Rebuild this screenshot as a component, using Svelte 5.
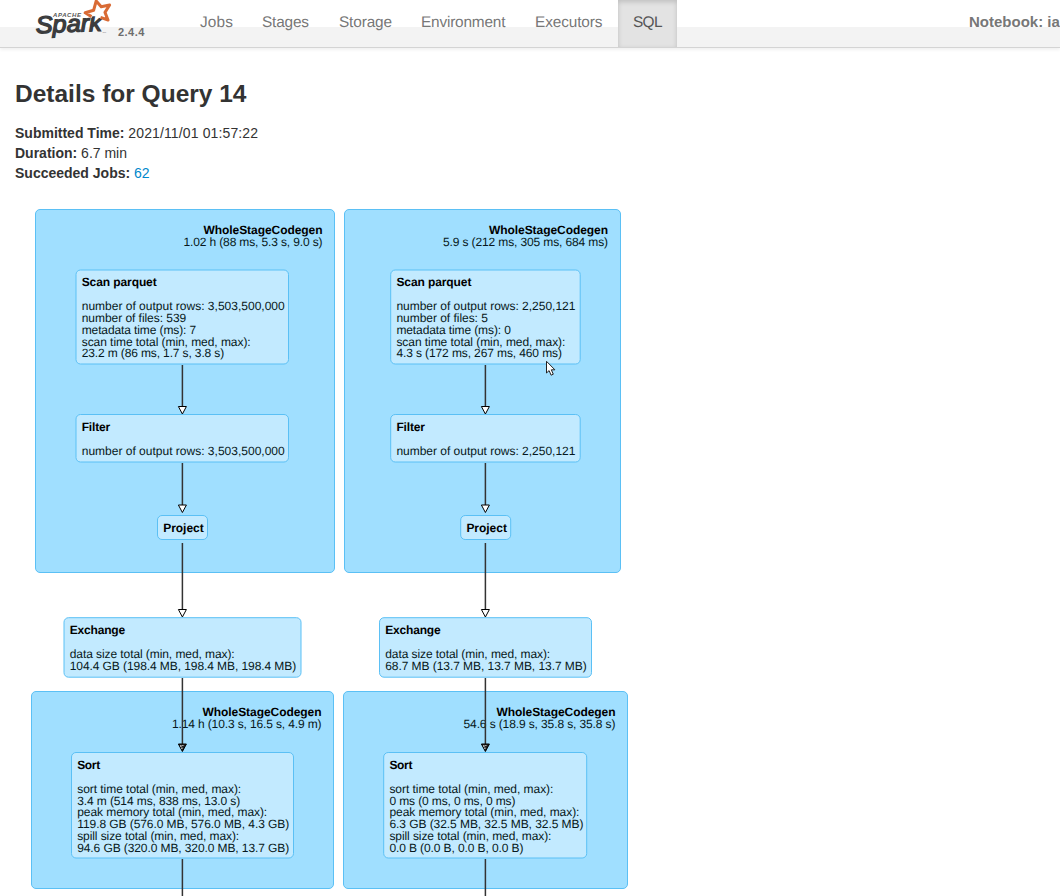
<script>
  const tabs = [
    { label: 'Jobs', width: 33 },
    { label: 'Stages', width: 47 },
    { label: 'Storage', width: 53 },
    { label: 'Environment', width: 84.5 },
    { label: 'Executors', width: 67.5 },
    { label: 'SQL', width: 29.5, active: true }
  ];

  const clusters = [
    { x: 35.5, y: 209.5, w: 299, h: 363, right: 322.5, title: 'WholeStageCodegen', detail: '1.02 h (88 ms, 5.3 s, 9.0 s)', len: 139 },
    { x: 344.5, y: 209.5, w: 276, h: 363, right: 608, title: 'WholeStageCodegen', detail: '5.9 s (212 ms, 305 ms, 684 ms)', len: 165 },
    { x: 31.5, y: 691.5, w: 302, h: 197, right: 321.5, title: 'WholeStageCodegen', detail: '1.14 h (10.3 s, 16.5 s, 4.9 m)', len: 149.5 },
    { x: 343.5, y: 691.5, w: 284, h: 197, right: 615.5, title: 'WholeStageCodegen', detail: '54.6 s (18.9 s, 35.8 s, 35.8 s)', len: 152 }
  ];

  const nodes = [
    { x: 76, y: 270, w: 212.5, h: 94, title: 'Scan parquet', tlen: 75, lines: [
      ['number of output rows: 3,503,500,000', 203], ['number of files: 539', 104.5], ['metadata time (ms): 7', 114.5],
      ['scan time total (min, med, max):', 169], ['23.2 m (86 ms, 1.7 s, 3.8 s)', 142.5] ] },
    { x: 390.7, y: 270, w: 189.5, h: 94, title: 'Scan parquet', tlen: 75, lines: [
      ['number of output rows: 2,250,121', 179], ['number of files: 5', 91.5], ['metadata time (ms): 0', 114.5],
      ['scan time total (min, med, max):', 169], ['4.3 s (172 ms, 267 ms, 460 ms)', 165.5] ] },
    { x: 76, y: 414.5, w: 212.5, h: 47.5, title: 'Filter', tlen: 28.5, lines: [['number of output rows: 3,503,500,000', 203]] },
    { x: 390.7, y: 414.5, w: 189.5, h: 47.5, title: 'Filter', tlen: 28.5, lines: [['number of output rows: 2,250,121', 179]] },
    { x: 157.5, y: 515.5, w: 50, h: 24, title: 'Project', tlen: 40.5, lines: [] },
    { x: 460.7, y: 515.5, w: 50, h: 24, title: 'Project', tlen: 40.5, lines: [] },
    { x: 64, y: 617.7, w: 237, h: 59.5, title: 'Exchange', tlen: 55.5, lines: [
      ['data size total (min, med, max):', 165], ['104.4 GB (198.4 MB, 198.4 MB, 198.4 MB)', 226.5] ] },
    { x: 379.5, y: 617.7, w: 212, h: 59.5, title: 'Exchange', tlen: 55.5, lines: [
      ['data size total (min, med, max):', 165], ['68.7 MB (13.7 MB, 13.7 MB, 13.7 MB)', 201.5] ] },
    { x: 71.5, y: 752.5, w: 222, h: 105.5, title: 'Sort', tlen: 23, lines: [
      ['sort time total (min, med, max):', 164], ['3.4 m (514 ms, 838 ms, 13.0 s)', 163], ['peak memory total (min, med, max):', 190],
      ['119.8 GB (576.0 MB, 576.0 MB, 4.3 GB)', 212], ['spill size total (min, med, max):', 162], ['94.6 GB (320.0 MB, 320.0 MB, 13.7 GB)', 212] ] },
    { x: 383.7, y: 752.5, w: 203, h: 105.5, title: 'Sort', tlen: 23, lines: [
      ['sort time total (min, med, max):', 164], ['0 ms (0 ms, 0 ms, 0 ms)', 126], ['peak memory total (min, med, max):', 190],
      ['6.3 GB (32.5 MB, 32.5 MB, 32.5 MB)', 194], ['spill size total (min, med, max):', 162], ['0.0 B (0.0 B, 0.0 B, 0.0 B)', 134] ] }
  ];

  const edges = [];
  for (const x of [182.4, 485.4]) {
    edges.push({ x, from: 365, to: 414 }, { x, from: 463, to: 512.5 }, { x, from: 543, to: 617 },
      { x, from: 678, to: 751.5, dark: true }, { x, from: 859, to: 910 });
  }
</script>

<div class="page">
  <header>
    <div class="brand">
      <svg class="logo" width="78" height="42" viewBox="34 0 78 42" aria-label="Apache Spark">
        <text class="spark" x="36" y="33.2" textLength="66" lengthAdjust="spacingAndGlyphs" transform="rotate(-2 36 33.2)">Spark</text>
        <path class="halo" d="M92.5 16.2L85.2 12.8L93.6 10.3L96.2 1L101.2 6.8L109.6 5L105 12.4L108 20L99.8 16.2" />
        <path class="star" d="M91.5 16.6L85.2 12.8L93.6 10.3L96.2 1L101.2 6.8L109.6 5L105 12.4L108 20L100.5 17.4" />
        <text class="apache" x="53" y="17" textLength="28">APACHE</text>
        <text class="tm" x="102.5" y="33">TM</text>
      </svg>
      <span class="version">2.4.4</span>
    </div>
    <nav>
      {#each tabs as tab}
        <a href="#top" class:active={tab.active}>
          <svg width={tab.width} height="24"><text x="0" y="17" textLength={tab.width}>{tab.label}</text></svg>
        </a>
      {/each}
    </nav>
    <strong class="app-name">Notebook: ian</strong>
  </header>

  <main>
    <h1>Details for Query 14</h1>
    <ul>
      <li><strong>Submitted Time:</strong> <span class="time">2021/11/01 01:57:22</span></li>
      <li><strong>Duration:</strong> 6.7 min</li>
      <li><strong>Succeeded Jobs:</strong> <a href="#job">62</a></li>
    </ul>
  </main>

  <svg class="graph" width="1060" height="696" viewBox="0 200 1060 696">
    {#each clusters as c}
      <rect class="cluster" x={c.x} y={c.y} width={c.w} height={c.h} rx="4.5" />
      <text class="title" x={c.right} y={c.y + 24.4} text-anchor="end" textLength="119">{c.title}</text>
      <text x={c.right} y={c.y + 36} text-anchor="end" textLength={c.len}>{c.detail}</text>
    {/each}
    {#each nodes as n}
      <rect class="node" x={n.x} y={n.y} width={n.w} height={n.h} rx="4.5" />
      <text class="title" x={n.x + 5.7} y={n.y + 16.3} textLength={n.tlen}>{n.title}</text>
      {#each n.lines as [text, len], i}
        <text x={n.x + 5.7} y={n.y + 40.2 + i * 11.8} textLength={len}>{text}</text>
      {/each}
    {/each}
    {#each edges as e}
      <path class="edge" d="M{e.x} {e.from}V{e.to - 7}" />
      <path class="head" class:dark={e.dark} d="M{e.x - 4} {e.to - 7.5}h8l-4 7.5z" />
      {#if e.dark}
        <path class="speck" d="M{e.x - 1.5} {e.to - 6.5}v2m2 -2v1m-1 1.5v1.5" />
      {/if}
    {/each}
    <path class="cursor" d="M546.5 361.3V373l2.6-2.4 2 4.6 2.2-1-2-4.4h3.6z" />
  </svg>
</div>

<style>
  :global(body) { background: #fff; overflow: hidden; }
  .page { width: 1060px; height: 896px; overflow: hidden; color: #333; font-family: "Liberation Sans", Arial, sans-serif; }
  header { height: 47px; border-bottom: 1px solid #d4d4d4; display: flex; background: linear-gradient(#fff 27px, #f3f3f3 27px); box-shadow: 0 2px 3px rgba(0, 0, 0, .06); }
  .brand { width: 184.8px; box-sizing: border-box; padding-left: 34px; display: flex; flex: none; }
  .logo { display: block; flex: none; }
  .spark { font: italic 24px "Liberation Sans", sans-serif; fill: #3b3c3e; stroke: #3b3c3e; stroke-width: 1.3; }
  .apache { font: italic bold 6px "Liberation Sans", sans-serif; fill: #555; }
  .tm { font: 2.5px "Liberation Sans", sans-serif; fill: #777; }
  .halo { fill: #fff; stroke: #fff; stroke-width: 3.6; }
  .star { fill: none; stroke: #d96b35; stroke-width: 3; stroke-linejoin: round; }
  .version { font-size: 11px; font-weight: bold; color: #6d6d6d; padding: 25px 0 0 6px; line-height: 14px; letter-spacing: .45px; }
  nav { display: flex; }
  nav a { display: block; height: 37px; padding: 10px 14.8px 0; }
  nav svg { display: block; overflow: visible; }
  nav text { font-size: 15.4px; fill: #777; text-rendering: geometricPrecision; }
  nav a.active { background: #e3e3e3; box-shadow: inset 0 2px 5px rgba(0, 0, 0, .16); }
  nav a.active text { fill: #555; }
  .app-name { margin-left: auto; margin-right: -9px; white-space: nowrap; font-size: 15px; line-height: 44px; color: #777; }
  main { padding: 31px 15px 0; height: 121px; }
  h1 { margin: 0 0 14px; font-size: 24.5px; line-height: 30px; }
  ul { list-style: none; padding: 0; margin: 0; font-size: 14px; line-height: 20px; }
  ul a { color: #0088cc; text-decoration: none; }
  .time { letter-spacing: .13px; }
  .graph { display: block; }
  .graph text { font-size: 12px; fill: #071820; text-rendering: geometricPrecision; }
  .graph .title { font-weight: bold; fill: #000; }
  .cluster { fill: #a0dfff; stroke: #5bc0f5; }
  .node { fill: #c2eaff; stroke: #5bc0f5; }
  .edge { stroke: #333; stroke-width: 1.5; fill: none; }
  .head { fill: #fff; stroke: #000; stroke-width: 1; }
  .head.dark { fill: #222; }
  .speck { stroke: #fff; stroke-width: 1; fill: none; }
  .cursor { fill: #fff; stroke: #222; stroke-width: 1; }
</style>
